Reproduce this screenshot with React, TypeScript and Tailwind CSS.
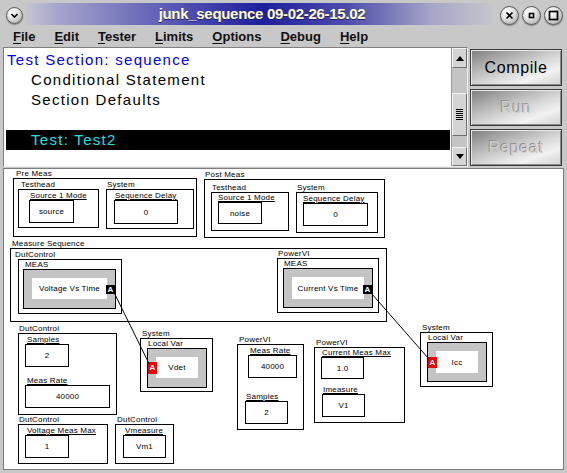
import React from "react";

type Rect = [number, number, number, number];

type Group = { r: Rect; label: string; lx: number };
type Field = Group & { value: string };
type Tile = { r: Rect; text: string };
type Badge = { r: Rect; red?: boolean };

// canvas content origin in page pixels
const OX = 4;
const OY = 169;

const groups: Group[] = [
  { r: [13, 178, 196, 236], label: "Pre Meas", lx: 16 },
  { r: [18, 189, 98, 227], label: "Testhead", lx: 21 },
  { r: [106, 189, 193, 228], label: "System", lx: 107 },
  { r: [204, 179, 384, 237], label: "Post Meas", lx: 205 },
  { r: [211, 192, 288, 230], label: "Testhead", lx: 212 },
  { r: [296, 192, 377, 232], label: "System", lx: 297 },
  { r: [10, 248, 386, 321], label: "Measure Sequence", lx: 12 },
  { r: [18, 259, 121, 313], label: "DutControl", lx: 15 },
  { r: [277, 258, 378, 312], label: "PowerVI", lx: 278 },
  { r: [18, 333, 116, 414], label: "DutControl", lx: 19 },
  { r: [140, 338, 212, 391], label: "System", lx: 142 },
  { r: [237, 344, 303, 429], label: "PowerVI", lx: 239 },
  { r: [314, 347, 404, 422], label: "PowerVI", lx: 316 },
  { r: [420, 332, 492, 386], label: "System", lx: 422 },
  { r: [18, 424, 107, 463], label: "DutControl", lx: 19 },
  { r: [115, 424, 173, 463], label: "DutControl", lx: 117 },
];

const fields: Field[] = [
  { r: [29, 200, 73, 222], label: "Source 1 Mode", lx: 30, value: "source" },
  { r: [114, 200, 177, 223], label: "Sequence Delay", lx: 115, value: "0" },
  { r: [218, 202, 261, 223], label: "Source 1 Mode", lx: 218, value: "noise" },
  { r: [303, 203, 367, 225], label: "Sequence Delay", lx: 303, value: "0" },
  { r: [25, 344, 68, 366], label: "Samples", lx: 27, value: "2" },
  { r: [25, 385, 109, 407], label: "Meas Rate", lx: 27, value: "40000" },
  { r: [248, 355, 296, 377], label: "Meas Rate", lx: 250, value: "40000" },
  { r: [245, 401, 287, 423], label: "Samples", lx: 246, value: "2" },
  { r: [321, 357, 363, 378], label: "Current Meas Max", lx: 322, value: "1.0" },
  { r: [322, 394, 364, 416], label: "Imeasure", lx: 323, value: "V1" },
  { r: [25, 435, 68, 457], label: "Voltage Meas Max", lx: 27, value: "1" },
  { r: [123, 435, 165, 457], label: "Vmeasure", lx: 125, value: "Vm1" },
];

const grays: Group[] = [
  { r: [23, 269, 115, 308], label: "MEAS", lx: 25 },
  { r: [283, 268, 372, 307], label: "MEAS", lx: 284 },
  { r: [147, 348, 206, 387], label: "Local Var", lx: 148 },
  { r: [427, 342, 486, 381], label: "Local Var", lx: 428 },
];

const tiles: Tile[] = [
  { r: [32, 278, 106, 298], text: "Voltage Vs Time" },
  { r: [292, 277, 363, 298], text: "Current Vs Time" },
  { r: [156, 357, 197, 377], text: "Vdet" },
  { r: [436, 351, 477, 372], text: "Icc" },
];

const badges: Badge[] = [
  { r: [106, 285, 114, 293] },
  { r: [363, 285, 371, 293] },
  { r: [148, 362, 156, 373], red: true },
  { r: [428, 357, 436, 367], red: true },
];

const wires: Rect[] = [
  [114, 293, 149, 364],
  [371, 293, 428, 358],
];

const menus = ["File", "Edit", "Tester", "Limits", "Options", "Debug", "Help"];

function box(r: Rect) {
  return {
    left: r[0] - OX,
    top: r[1] - OY,
    width: r[2] - r[0] + 1,
    height: r[3] - r[1] + 1,
  };
}

function labelAt(lx: number, y: number) {
  return { left: lx - OX, top: y - 9 - OY };
}

function Knob({ children, small }: { children: React.ReactNode; small?: boolean }) {
  return (
    <div
      className={
        (small ? "size-[17px]" : "size-[19px]") +
        " flex items-center justify-center rounded-full border border-[#5a5a5a] bg-[radial-gradient(circle_at_35%_30%,#ffffff_0%,#e4e4e4_40%,#9c9c9c_100%)] shadow-[0_1px_1px_rgba(0,0,0,0.35)]"
      }
    >
      {children}
    </div>
  );
}

function ActionButton({ label, disabled }: { label: string; disabled?: boolean }) {
  return (
    <div className="flex h-[37px] items-center justify-center border border-[#3c3c3c] bg-[linear-gradient(160deg,#7e7e7e_0%,#a8a8a8_25%,#d8d8d8_55%,#f2f2f2_75%,#d0d0d0_100%)] shadow-[inset_1px_1px_0_#e8e8e8,inset_-1px_-1px_0_#8a8a8a]">
      <span
        className={
          disabled
            ? "text-[16px] tracking-[0.6px] text-[#cdcdcd] [text-shadow:-1px_-1px_0_#8e8e8e]"
            : "text-[16px] tracking-[0.6px] text-black"
        }
      >
        {label}
      </span>
    </div>
  );
}

function Canvas() {
  return (
    <div className="relative ml-[3px] h-[302px] w-[561px] overflow-hidden border border-[#7c7c7c] bg-white text-[8px] leading-[9px] tracking-[0.2px] text-black">
      {groups.map((g, i) => (
        <React.Fragment key={"g" + i}>
          <div className="absolute border border-black" style={box(g.r)} />
          <div className="absolute whitespace-nowrap" style={labelAt(g.lx, g.r[1])}>
            {g.label}
          </div>
        </React.Fragment>
      ))}
      {fields.map((f, i) => (
        <React.Fragment key={"f" + i}>
          <div className="absolute flex items-center justify-center border border-black" style={box(f.r)}>
            {f.value}
          </div>
          <div className="absolute whitespace-nowrap underline underline-offset-1" style={labelAt(f.lx, f.r[1])}>
            {f.label}
          </div>
        </React.Fragment>
      ))}
      {grays.map((g, i) => (
        <React.Fragment key={"m" + i}>
          <div className="absolute border border-black bg-[#c4c4c4]" style={box(g.r)} />
          <div className="absolute whitespace-nowrap" style={labelAt(g.lx, g.r[1])}>
            {g.label}
          </div>
        </React.Fragment>
      ))}
      {tiles.map((t, i) => (
        <div key={"t" + i} className="absolute flex items-center justify-center whitespace-nowrap bg-white" style={box(t.r)}>
          {t.text}
        </div>
      ))}
      {badges.map((b, i) => (
        <div
          key={"b" + i}
          className={
            (b.red ? "bg-[#f00000]" : "bg-black") +
            " absolute flex items-center justify-center text-[8px] font-bold leading-none text-white"
          }
          style={box(b.r)}
        >
          A
        </div>
      ))}
      <svg className="pointer-events-none absolute inset-0" width="559" height="300">
        {wires.map((w, i) => (
          <line
            key={i}
            x1={w[0] - OX + 0.5}
            y1={w[1] - OY + 0.5}
            x2={w[2] - OX + 0.5}
            y2={w[3] - OY + 0.5}
            stroke="#000"
            strokeWidth="1"
          />
        ))}
      </svg>
    </div>
  );
}

export default function App() {
  return (
    <div className="flex h-[473px] w-[567px] flex-col overflow-hidden bg-[#c8c8c8] font-['Liberation_Sans',Arial,sans-serif] select-none">
      {/* title bar */}
      <div className="flex h-[26px] shrink-0 items-start">
        <div className="ml-[6px] mt-[7px]">
          <Knob small>
            <svg width="9" height="9" viewBox="0 0 9 9">
              <path d="M1.5 3 L4.5 6 L7.5 3" fill="none" stroke="#000" strokeWidth="1.6" />
            </svg>
          </Knob>
        </div>
        <div className="ml-[3px] mt-[3px] flex h-[22px] w-[472px] items-center justify-center bg-[linear-gradient(90deg,#c4c4d0_0%,#a4a4cc_7%,#6464b8_27%,#1e1e9e_50%,#4c4cac_68%,#a6a6c8_86%,#c8c8cc_100%)]">
          <span className="text-[15px] font-bold tracking-[-0.3px] text-[#ffffd0] [text-shadow:0_1px_0_#20205a]">
            junk_sequence 09-02-26-15.02
          </span>
        </div>
        <div className="ml-[2px] mt-[6px] flex gap-[3px]">
          <Knob>
            <svg width="9" height="9" viewBox="0 0 9 9">
              <path d="M1.5 1.5 L7.5 7.5 M7.5 1.5 L1.5 7.5" stroke="#000" strokeWidth="1.7" />
            </svg>
          </Knob>
          <Knob>
            <svg width="9" height="9" viewBox="0 0 9 9">
              <rect x="2.5" y="2.5" width="4" height="4" fill="none" stroke="#000" strokeWidth="1.6" />
            </svg>
          </Knob>
          <Knob>
            <svg width="11" height="11" viewBox="0 0 11 11">
              <rect x="1.5" y="1.5" width="8" height="8" fill="none" stroke="#000" strokeWidth="1.7" />
            </svg>
          </Knob>
        </div>
      </div>

      {/* menu bar */}
      <div className="flex h-[21px] shrink-0 items-center gap-[19px] pl-[13px] pt-[1px] text-[13px] font-bold text-[#111]">
        {menus.map((m) => (
          <span key={m}>
            <span className="underline underline-offset-2">{m[0]}</span>
            {m.slice(1)}
          </span>
        ))}
      </div>

      {/* list + actions */}
      <div className="flex h-[121px] shrink-0">
        <div className="ml-[3px] flex h-[120px] w-[465px] border border-[#808080] border-r-[#f0f0f0] border-b-[#f0f0f0]">
          <div className="w-[447px] bg-white pt-[2px] text-[15px] tracking-[1.3px]">
            <div className="h-[20px] pl-[3px] leading-[20px] text-[#0000f0]">Test Section: sequence</div>
            <div className="h-[20px] pl-[27px] leading-[20px] text-black">Conditional Statement</div>
            <div className="h-[20px] pl-[27px] leading-[20px] text-black">Section Defaults</div>
            <div className="h-[20px]" />
            <div className="ml-[2px] mr-[1px] h-[20px] bg-black pl-[25px] leading-[20px] text-[#1ee0e0]">Test: Test2</div>
          </div>
          <div className="flex w-[16px] flex-col border-l border-[#9a9a9a] bg-[#c4c4c4]">
            <div className="flex h-[20px] items-center justify-center border border-[#f4f4f4] border-r-[#707070] border-b-[#707070] bg-[#d4d4d4]">
              <svg width="8" height="5" viewBox="0 0 8 5">
                <path d="M0 5 L4 0 L8 5 Z" fill="#000" />
              </svg>
            </div>
            <div className="h-[25px]" />
            <div className="flex h-[43px] flex-col items-center justify-center gap-[1px] border border-[#f4f4f4] border-r-[#707070] border-b-[#707070] bg-[#d4d4d4]">
              {[0, 1, 2, 3, 4, 5].map((k) => (
                <div key={k} className="h-[1px] w-[7px] bg-black" />
              ))}
            </div>
            <div className="flex-1" />
            <div className="flex h-[19px] items-center justify-center border border-[#f4f4f4] border-r-[#707070] border-b-[#707070] bg-[#d4d4d4]">
              <svg width="8" height="5" viewBox="0 0 8 5">
                <path d="M0 0 L8 0 L4 5 Z" fill="#000" />
              </svg>
            </div>
          </div>
        </div>
        <div className="ml-[2px] flex w-[92px] flex-col gap-[3px] pt-[2px]">
          <ActionButton label="Compile" />
          <ActionButton label="Run" disabled />
          <ActionButton label="Repeat" disabled />
        </div>
      </div>

      <Canvas />
    </div>
  );
}
